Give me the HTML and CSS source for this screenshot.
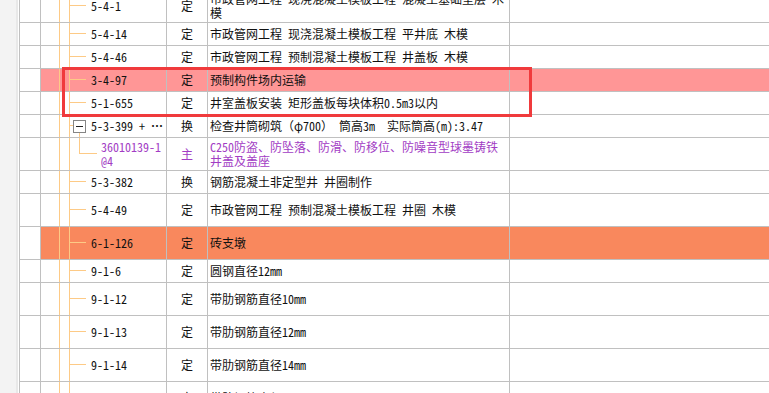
FILE: index.html
```html
<!DOCTYPE html>
<html lang="zh-CN">
<head>
  <meta charset="UTF-8">
  <title>定额列表</title>
  <link rel="stylesheet" href="styles.css">
</head>
<body>
  <div class="gutter"></div>

  <div class="grid">
    <div class="row tall">
      <div class="cell"></div>
      <div class="cell tree">5-4-1</div>
      <div class="cell kind">定</div>
      <div class="cell desc">市政管网工程 现浇混凝土模板工程 混凝土基础垫层 木<br>模</div>
      <div class="cell"></div>
    </div>
    <div class="row">
      <div class="cell"></div>
      <div class="cell tree">5-4-14</div>
      <div class="cell kind">定</div>
      <div class="cell desc">市政管网工程 现浇混凝土模板工程 平井底 木模</div>
      <div class="cell"></div>
    </div>
    <div class="row">
      <div class="cell"></div>
      <div class="cell tree">5-4-46</div>
      <div class="cell kind">定</div>
      <div class="cell desc">市政管网工程 预制混凝土模板工程 井盖板 木模</div>
      <div class="cell"></div>
    </div>
    <div class="row pink">
      <div class="cell"></div>
      <div class="cell tree">3-4-97</div>
      <div class="cell kind">定</div>
      <div class="cell desc">预制构件场内运输</div>
      <div class="cell"></div>
    </div>
    <div class="row">
      <div class="cell"></div>
      <div class="cell tree">5-1-655</div>
      <div class="cell kind">定</div>
      <div class="cell desc">井室盖板安装 矩形盖板每块体积0.5m3以内</div>
      <div class="cell"></div>
    </div>
    <div class="row">
      <div class="cell"></div>
      <div class="cell tree parent"><span class="toggle"></span>5-3-399 + <span class="more">⋯</span></div>
      <div class="cell kind">换</div>
      <div class="cell desc">检查井筒砌筑（φ700） 筒高3m  实际筒高(m):3.47</div>
      <div class="cell"></div>
    </div>
    <div class="row tall sub">
      <div class="cell"></div>
      <div class="cell tree child">36010139-1<br>@4</div>
      <div class="cell kind">主</div>
      <div class="cell desc">C250防盗、防坠落、防滑、防移位、防噪音型球墨铸铁<br>井盖及盖座</div>
      <div class="cell"></div>
    </div>
    <div class="row">
      <div class="cell"></div>
      <div class="cell tree">5-3-382</div>
      <div class="cell kind">换</div>
      <div class="cell desc">钢筋混凝土非定型井 井圈制作</div>
      <div class="cell"></div>
    </div>
    <div class="row tall">
      <div class="cell"></div>
      <div class="cell tree">5-4-49</div>
      <div class="cell kind">定</div>
      <div class="cell desc">市政管网工程 预制混凝土模板工程 井圈 木模</div>
      <div class="cell"></div>
    </div>
    <div class="row tall orange">
      <div class="cell"></div>
      <div class="cell tree">6-1-126</div>
      <div class="cell kind">定</div>
      <div class="cell desc">砖支墩</div>
      <div class="cell"></div>
    </div>
    <div class="row">
      <div class="cell"></div>
      <div class="cell tree">9-1-6</div>
      <div class="cell kind">定</div>
      <div class="cell desc">圆钢直径12mm</div>
      <div class="cell"></div>
    </div>
    <div class="row tall">
      <div class="cell"></div>
      <div class="cell tree">9-1-12</div>
      <div class="cell kind">定</div>
      <div class="cell desc">带肋钢筋直径10mm</div>
      <div class="cell"></div>
    </div>
    <div class="row tall">
      <div class="cell"></div>
      <div class="cell tree">9-1-13</div>
      <div class="cell kind">定</div>
      <div class="cell desc">带肋钢筋直径12mm</div>
      <div class="cell"></div>
    </div>
    <div class="row tall">
      <div class="cell"></div>
      <div class="cell tree">9-1-14</div>
      <div class="cell kind">定</div>
      <div class="cell desc">带肋钢筋直径14mm</div>
      <div class="cell"></div>
    </div>
    <div class="row tall">
      <div class="cell"></div>
      <div class="cell tree">9-1-15</div>
      <div class="cell kind">定</div>
      <div class="cell desc">带肋钢筋直径16mm</div>
      <div class="cell"></div>
    </div>
  </div>

  <!-- annotation box drawn over the two rows -->
  <div class="mark"></div>
</body>
</html>
```

FILE: styles.css
```css
html, body {
  height: 100%;
}
body {
  margin: 0;
  display: flex;
  overflow: hidden;
  background: #fff;
  color: #111;
  font-family: "Noto Sans Mono CJK SC", "Noto Sans CJK SC", sans-serif;
  font-size: 12px;
  line-height: 14px;
}
.gutter {
  width: 16px;
  flex: none;
  background: #f3f3f3;
  border-right: 2px solid #e8e8e8;
  margin-right: 1px;
}
.grid {
  flex: 1;
  margin-top: -10px;
  border-left: 1px solid #c0c0c0;
}
.row {
  display: grid;
  grid-template-columns: 21px 126px 41px 302px 1fr;
  height: 23px;
}
.row.tall {
  height: 33px;
}
.cell {
  box-sizing: border-box;
  border-right: 1px solid #c0c0c0;
  border-bottom: 1px solid #c0c0c0;
  display: flex;
  align-items: center;
  white-space: pre;
  overflow: hidden;
}
.cell:last-child {
  border-right: none;
}
.pink .cell:not(:first-child) {
  background-color: #ff9696;
}
.orange .cell:not(:first-child) {
  background-color: #f9885d;
}

/* tree column: guide lines drawn as backgrounds */
.tree {
  padding-left: 50px;
  background-image:
    linear-gradient(#fdca86, #fdca86),
    linear-gradient(#fdca86, #fdca86),
    linear-gradient(#fdca86, #fdca86);
  background-repeat: no-repeat;
  background-position: 28px calc(50% - 0.5px), 18px 0, 28px 0;
  background-size: 17px 1px, 1px 100%, 1px 100%;
}
.tree.parent {
  padding-left: 32px;
  background-image:
    linear-gradient(#fdca86, #fdca86),
    linear-gradient(#fdca86, #fdca86),
    linear-gradient(#fdca86, #fdca86),
    linear-gradient(#fdca86, #fdca86);
  background-position: 28px calc(50% - 0.5px), 18px 0, 28px 0, 38px 100%;
  background-size: 4px 1px, 1px 100%, 1px 100%, 1px 50%;
}
.toggle {
  flex: none;
  box-sizing: border-box;
  width: 13px;
  height: 13px;
  margin-right: 5px;
  border: 1px solid #858585;
  background: #fff linear-gradient(#222, #222) center / 7px 1px no-repeat;
}
.more {
  flex: none;
  font-weight: bold;
}
.tree.child {
  padding-left: 60px;
  background-image:
    linear-gradient(#fdca86, #fdca86),
    linear-gradient(#fdca86, #fdca86),
    linear-gradient(#fdca86, #fdca86),
    linear-gradient(#fdca86, #fdca86);
  background-position: 38px calc(50% - 0.5px), 18px 0, 28px 0, 38px 0;
  background-size: 18px 1px, 1px 100%, 1px 100%, 1px 50%;
}
.sub .tree,
.sub .kind,
.sub .desc {
  color: #a23cc4;
}
.kind {
  justify-content: center;
}
.desc {
  padding-left: 2px;
}

.mark {
  position: absolute;
  left: 62px;
  top: 67px;
  width: 470px;
  height: 50px;
  box-sizing: border-box;
  border: 3px solid #f03a3c;
}
```
